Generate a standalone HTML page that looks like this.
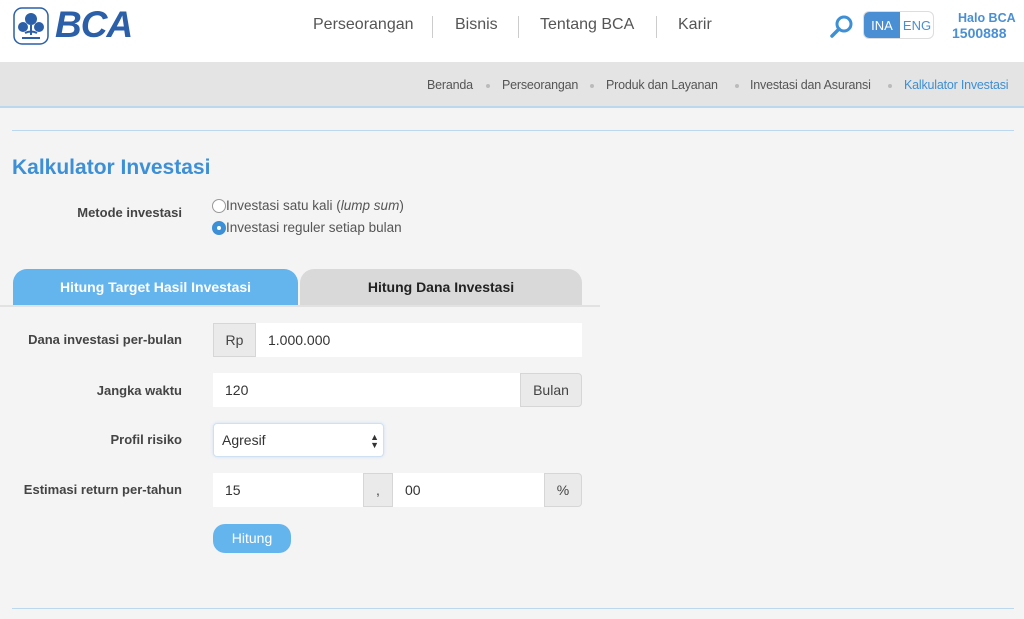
<!DOCTYPE html>
<html><head><meta charset="utf-8"><style>
*{margin:0;padding:0;box-sizing:border-box}
body{width:1024px;height:619px;overflow:hidden;background:#f4f4f4;font-family:"Liberation Sans",sans-serif;color:#333;position:relative}
.a{position:absolute}
.hdr{left:0;top:0;width:1024px;height:62px;background:#fff}
.nav{top:16px;font-size:16px;color:#555}
.sep{top:16px;width:1px;height:22px;background:#ccc}
.bc{left:0;top:62px;width:1024px;height:46px;background:#e4e4e4;border-bottom:2px solid #bcd8ef}
.bc span{position:absolute;top:16px;font-size:12.5px;color:#555;letter-spacing:-0.2px}
.dot{width:4px;height:4px;background:#bbb;border-radius:50%;top:22px}
.lbl{font-size:13px;font-weight:bold;color:#444;text-align:right;width:182px;left:0}
.inp{background:#fff;font-size:14px;padding-left:12px;line-height:34px;height:34px;color:#333}
.add{background:#eaeaea;border:1px solid #d6d6d6;font-size:14px;text-align:center;line-height:32px;height:34px;color:#444}
</style></head><body>
<div class="a hdr"></div>
<svg class="a" style="left:13px;top:7px" width="36" height="38" viewBox="0 0 36 38"><rect x="1" y="1" width="34" height="36" rx="8" fill="#fff" stroke="#2b5fa8" stroke-width="1.5"/><circle cx="18" cy="12" r="6" fill="#2b5fa8"/><circle cx="10" cy="20" r="5" fill="#2b5fa8"/><circle cx="26" cy="20" r="5" fill="#2b5fa8"/><path d="M18 18v10M12 26q6-3 12 0" stroke="#2b5fa8" stroke-width="2" fill="none"/><rect x="9" y="30" width="18" height="2" fill="#2b5fa8"/></svg>
<div class="a" style="left:55px;top:4px;font-size:37px;font-weight:bold;font-style:italic;color:#2b5fa8;letter-spacing:-1px">BCA</div>
<div class="a nav" style="left:313px">Perseorangan</div>
<div class="a sep" style="left:432px"></div>
<div class="a nav" style="left:455px">Bisnis</div>
<div class="a sep" style="left:518px"></div>
<div class="a nav" style="left:540px">Tentang BCA</div>
<div class="a sep" style="left:656px"></div>
<div class="a nav" style="left:678px">Karir</div>
<svg class="a" style="left:829px;top:14px" width="26" height="26" viewBox="0 0 26 26"><circle cx="15" cy="10" r="7" fill="none" stroke="#3d8fd6" stroke-width="3"/><path d="M10 15L3 22" stroke="#3d8fd6" stroke-width="3.5" stroke-linecap="round"/></svg>
<div class="a" style="left:863px;top:11px;width:71px;height:28px;border:1px solid #ddd;border-radius:6px;overflow:hidden;background:#fff">
<div class="a" style="left:0;top:0;width:36px;height:28px;background:#4a8fd4;color:#fff;font-size:13px;line-height:27px;text-align:center">INA</div>
<div class="a" style="left:36px;top:0;width:34px;color:#4a8fd4;font-size:13px;line-height:27px;text-align:center">ENG</div></div>
<div class="a" style="left:958px;top:11px;font-size:12.5px;font-weight:bold;color:#4a8fd4">Halo BCA</div>
<div class="a" style="left:952px;top:25px;font-size:14px;font-weight:bold;color:#4a8fd4">1500888</div>
<div class="a bc">
<span style="left:427px">Beranda</span><div class="a dot" style="left:486px"></div>
<span style="left:502px">Perseorangan</span><div class="a dot" style="left:590px"></div>
<span style="left:606px">Produk dan Layanan</span><div class="a dot" style="left:735px"></div>
<span style="left:750px">Investasi dan Asuransi</span><div class="a dot" style="left:888px"></div>
<span style="left:904px;color:#3d8fd6">Kalkulator Investasi</span></div>
<div class="a" style="left:12px;top:130px;width:1002px;height:1px;background:#bcd8ef"></div>
<div class="a" style="left:12px;top:156px;font-size:21px;font-weight:bold;color:#3d8fd6">Kalkulator Investasi</div>
<div class="a lbl" style="top:205px">Metode investasi</div>
<div class="a" style="left:212px;top:199px;width:14px;height:14px;border-radius:50%;border:1px solid #999;background:#fff"></div>
<div class="a" style="left:226px;top:198px;font-size:13.5px;color:#555">Investasi satu kali (<i>lump sum</i>)</div>
<div class="a" style="left:212px;top:221px;width:14px;height:14px;border-radius:50%;background:#3d8fd6;border:1px solid #3d8fd6"><div class="a" style="left:4px;top:4px;width:4px;height:4px;border-radius:50%;background:#fff"></div></div>
<div class="a" style="left:226px;top:220px;font-size:13.5px;color:#555">Investasi reguler setiap bulan</div>
<div class="a" style="left:13px;top:269px;width:285px;height:37px;background:#64b4ee;border-radius:14px 14px 0 0;color:#fff;font-weight:bold;font-size:14px;text-align:center;line-height:37px">Hitung Target Hasil Investasi</div>
<div class="a" style="left:300px;top:269px;width:282px;height:37px;background:#d9d9d9;border-radius:14px 14px 0 0;color:#222;font-weight:bold;font-size:14px;text-align:center;line-height:37px">Hitung Dana Investasi</div>
<div class="a" style="left:0;top:305px;width:600px;height:2px;background:#e2e2e2"></div>
<div class="a lbl" style="top:332px">Dana investasi per-bulan</div>
<div class="a add" style="left:213px;top:323px;width:43px">Rp</div>
<div class="a inp" style="left:256px;top:323px;width:326px">1.000.000</div>
<div class="a lbl" style="top:383px">Jangka waktu</div>
<div class="a inp" style="left:213px;top:373px;width:307px">120</div>
<div class="a add" style="left:520px;top:373px;width:62px;border-radius:0 4px 4px 0">Bulan</div>
<div class="a lbl" style="top:432px">Profil risiko</div>
<div class="a inp" style="left:213px;top:423px;width:171px;border:1px solid #cfe0f3;border-radius:4px;box-shadow:0 0 3px #cfe0f3;line-height:32px;padding-left:8px">Agresif<span style="position:absolute;right:4px;top:0;font-size:9px;line-height:8px;padding-top:9px">▲<br>▼</span></div>
<div class="a lbl" style="top:482px">Estimasi return per-tahun</div>
<div class="a inp" style="left:213px;top:473px;width:150px">15</div>
<div class="a add" style="left:363px;top:473px;width:30px">,</div>
<div class="a inp" style="left:393px;top:473px;width:151px">00</div>
<div class="a add" style="left:544px;top:473px;width:38px;border-radius:0 4px 4px 0">%</div>
<div class="a" style="left:213px;top:524px;width:78px;height:29px;background:#64b4ee;border-radius:12px;color:#fff;font-size:14px;text-align:center;line-height:29px">Hitung</div>
<div class="a" style="left:12px;top:608px;width:1002px;height:1px;background:#bcd8ef"></div>
</body></html>
